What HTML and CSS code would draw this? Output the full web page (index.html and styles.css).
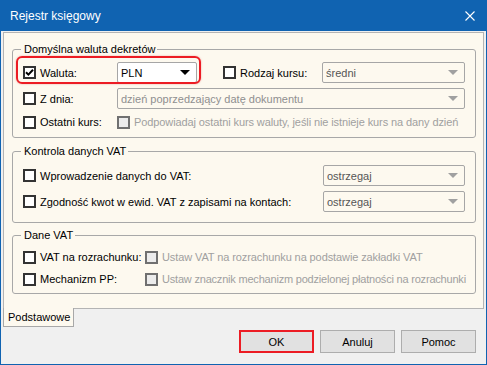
FILE: index.html
```html
<!DOCTYPE html>
<html lang="pl">
<head>
    <meta charset="UTF-8">
    <title>Rejestr księgowy</title>
    <link rel="stylesheet" href="styles.css">
</head>
<body>
    <div class="window">
        <div class="titlebar">
            <span class="title">Rejestr księgowy</span>
            <span class="close">
                <svg width="10" height="10" viewBox="0 0 10 10"><path d="M0.5 0.5 L9.5 9.5 M9.5 0.5 L0.5 9.5" stroke="#fff" stroke-width="1.1" fill="none"/></svg>
            </span>
        </div>
        <div class="body">
            <div class="tab-page">
                <fieldset class="group g1">
                    <legend>Domyślna waluta dekretów</legend>
                    <div class="row tall">
                        <div class="highlight"></div>
                        <label class="check cell-a"><span class="box"><svg width="9" height="9" viewBox="0 0 9 9"><path d="M1 4.2 L3.4 6.6 L8 1.8" stroke="#000" stroke-width="2" fill="none"/></svg></span>Waluta:</label>
                        <div class="combo pln"><span class="val">PLN</span><span class="arrow"></span></div>
                        <label class="check cell-b"><span class="box"></span>Rodzaj kursu:</label>
                        <div class="combo off grow"><span class="val">średni</span><span class="arrow"></span></div>
                    </div>
                    <div class="row tall">
                        <label class="check cell-a"><span class="box"></span>Z dnia:</label>
                        <div class="combo off grow light"><span class="val">dzień poprzedzający datę dokumentu</span><span class="arrow"></span></div>
                    </div>
                    <div class="row short">
                        <label class="check cell-a"><span class="box"></span>Ostatni kurs:</label>
                        <label class="check dis clip"><span class="box"></span>Podpowiadaj ostatni kurs waluty, jeśli nie istnieje kurs na dany dzień</label>
                    </div>
                </fieldset>

                <fieldset class="group g2">
                    <legend>Kontrola danych VAT</legend>
                    <div class="row tall">
                        <label class="check grow"><span class="box"></span>Wprowadzenie danych do VAT:</label>
                        <div class="combo off side"><span class="val">ostrzegaj</span><span class="arrow"></span></div>
                    </div>
                    <div class="row tall">
                        <label class="check grow"><span class="box"></span>Zgodność kwot w ewid. VAT z zapisami na kontach:</label>
                        <div class="combo off side"><span class="val">ostrzegaj</span><span class="arrow"></span></div>
                    </div>
                </fieldset>

                <fieldset class="group g3">
                    <legend>Dane VAT</legend>
                    <div class="row short">
                        <label class="check cell-c"><span class="box"></span>VAT na rozrachunku:</label>
                        <label class="check dis clip"><span class="box"></span>Ustaw VAT na rozrachunku na podstawie zakładki VAT</label>
                    </div>
                    <div class="row short">
                        <label class="check cell-c"><span class="box"></span>Mechanizm PP:</label>
                        <label class="check dis clip wide"><span class="box"></span>Ustaw znacznik mechanizm podzielonej płatności na rozrachunki</label>
                    </div>
                </fieldset>
            </div>
            <div class="footer">
                <div class="tab">Podstawowe</div>
                <div class="buttons">
                    <button class="btn ok">OK</button>
                    <button class="btn">Anuluj</button>
                    <button class="btn">Pomoc</button>
                </div>
            </div>
        </div>
    </div>
</body>
</html>
```

FILE: styles.css
```css
body {
    margin: 0;
    font-family: 'Liberation Sans', Arial, sans-serif;
    font-size: 11px;
    color: #000;
}
.window {
    width: 487px;
    height: 365px;
    box-sizing: border-box;
    border: 1px solid #1063b1;
    border-top: none;
    background-color: #f0f0f0;
    display: flex;
    flex-direction: column;
}
.titlebar {
    height: 31px;
    margin: 0 -1px;
    background-color: #1063b1;
    color: #fff;
    display: flex;
    align-items: center;
    justify-content: space-between;
    padding: 0 12px 0 10px;
    font-size: 12px;
}
.close {
    display: flex;
    margin-top: 1px;
}
.body {
    flex: 1;
    padding: 1px 2px 0 2px;
    display: flex;
    flex-direction: column;
}
.tab-page {
    background-color: #fdf9ef;
    border: 1px solid #b4b4b4;
    padding: 10px 7px 14px 8px;
}
.group {
    margin: 0;
    min-width: 0;
    border: 1px solid #a8a8a8;
    border-radius: 3px;
    padding: 6px 10px 7px 10px;
    display: flex;
    flex-direction: column;
    gap: 5px;
}
.group legend {
    padding: 0 2px 0 3px;
    margin-left: -2px;
    line-height: 13px;
}
.g2 {
    margin-top: 7px;
    padding: 7px 10px 10px 10px;
}
.g3 {
    margin-top: 6px;
    padding: 7px 10px 6px 10px;
    gap: 6px;
}
.row {
    display: flex;
    align-items: center;
    position: relative;
}
.row.tall {
    height: 21px;
}
.row.short {
    height: 16px;
}
/* czerwona ramka wokół pola waluty */
.highlight {
    position: absolute;
    left: -7px;
    top: -6px;
    width: 185px;
    height: 28px;
    box-sizing: border-box;
    border: 2px solid #ec1c24;
    border-radius: 6px;
    box-shadow: 0 0 2px rgba(200, 0, 0, 0.35);
}
.check {
    display: flex;
    align-items: center;
    white-space: nowrap;
}
.check .box {
    width: 13px;
    height: 13px;
    box-sizing: border-box;
    border: 2px solid #333;
    background-color: #fff;
    margin-right: 4px;
    flex: none;
    display: flex;
    align-items: center;
    justify-content: center;
}
.check.dis {
    color: #a0a0a0;
    letter-spacing: -0.1px;
}
.check.dis .box {
    border-color: #707070;
    background-color: #ececec;
}
.clip {
    flex: 1;
    overflow: hidden;
    min-width: 0;
}
.clip.wide {
    margin-right: -2px;
    letter-spacing: -0.2px;
}
.cell-a {
    width: 94px;
}
.cell-b {
    width: 99px;
    margin-left: 26px;
}
.cell-c {
    width: 122px;
}
.grow {
    flex: 1;
    min-width: 0;
}
.combo {
    height: 21px;
    box-sizing: border-box;
    border: 1px solid #a6a6a6;
    border-radius: 2px;
    display: flex;
    align-items: center;
    padding: 0 6px 0 3px;
    color: #555;
}
.combo .val {
    flex: 1;
    white-space: nowrap;
    overflow: hidden;
}
.combo .arrow {
    width: 0;
    height: 0;
    border-top: 5px solid #a0a0a0;
    border-left: 5px solid transparent;
    border-right: 5px solid transparent;
    margin-left: 4px;
}
.combo.pln {
    width: 80px;
    background-color: #fff;
    color: #000;
}
.combo.pln .arrow {
    border-top-color: #000;
}
.combo.light {
    color: #8f8f8f;
}
.combo.side {
    width: 142px;
}
.footer {
    flex: 1;
    display: flex;
    flex-direction: column;
}
.tab {
    width: 71px;
    height: 19px;
    box-sizing: border-box;
    margin-top: -1px;
    border: 1px solid #a8a8a8;
    border-top: none;
    background-color: #fdf9ef;
    padding: 3px 0 0 4px;
    font-size: 11px;
}
.buttons {
    display: flex;
    justify-content: flex-end;
    gap: 6px;
    margin-top: 3px;
    padding-right: 8px;
}
.btn {
    width: 75px;
    height: 23px;
    border: 1px solid #adadad;
    background-color: #e1e1e1;
    font-family: 'Liberation Sans', Arial, sans-serif;
    font-size: 11px;
    color: #000;
    padding: 0;
}
.btn.ok {
    border: 2px solid #ec1c24;
}
```
